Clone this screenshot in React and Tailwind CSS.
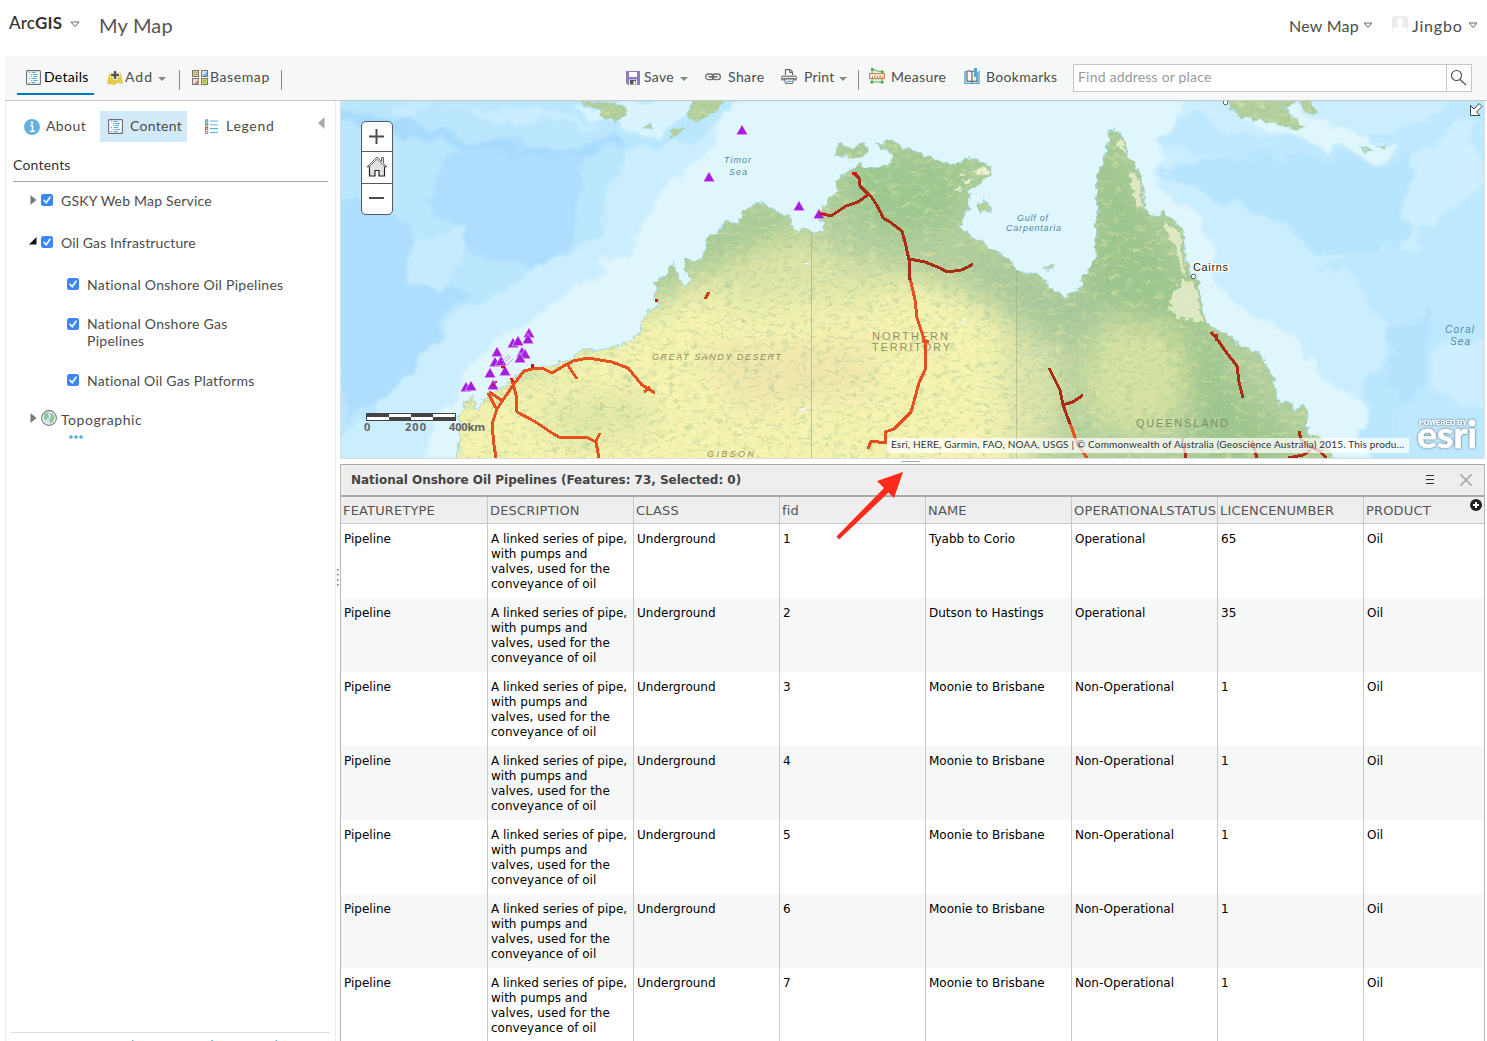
import React from "react";

const ROWS = [
  ["1", "Tyabb to Corio", "Operational", "65"],
  ["2", "Dutson to Hastings", "Operational", "35"],
  ["3", "Moonie to Brisbane", "Non-Operational", "1"],
  ["4", "Moonie to Brisbane", "Non-Operational", "1"],
  ["5", "Moonie to Brisbane", "Non-Operational", "1"],
  ["6", "Moonie to Brisbane", "Non-Operational", "1"],
  ["7", "Moonie to Brisbane", "Non-Operational", "1"],
];

const COLUMNS = ["FEATURETYPE", "DESCRIPTION", "CLASS", "fid", "NAME", "OPERATIONALSTATUS", "LICENCENUMBER", "PRODUCT"];

const GRID = "grid grid-cols-[147px_146px_146px_146px_146px_146px_146px_120px]";

function OutlineCaret({ className }) {
  return (
    <svg className={className} width="10" height="7" viewBox="0 0 10 7" fill="none" stroke="#666" strokeWidth="1">
      <path d="M1 1H9L5 5.5Z" />
    </svg>
  );
}

function SolidCaret({ className }) {
  return (
    <svg className={className} width="8" height="4" viewBox="0 0 8 4" fill="#888">
      <path d="M0 0H8L4 4Z" />
    </svg>
  );
}

function ListIcon() {
  return (
    <svg className="shrink-0" width="15" height="15" viewBox="0 0 15 15" fill="none">
      <rect x=".6" y=".6" width="13.8" height="13.8" rx="1" fill="#fbfdfe" stroke="#6b6b74" strokeWidth="1.1" />
      <path d="M3 2.5h1M5.5 2.5h4M5 4.5h1M7 4.5h5M5 6.5h1M7 6.5h4M3 8.5h1M5.5 8.5h5M5 10.5h1M7 10.5h5M3 12.5h1M5.5 12.5h4" stroke="#5aaee0" />
    </svg>
  );
}

function AddIcon() {
  return (
    <svg className="shrink-0" width="16" height="16" viewBox="0 0 16 16">
      <path d="M2 3l6-1 6 1 2 11-5-1-4 2-7-1Z" fill="#e3cb4f" />
      <path d="M2 3l6 7 6-6v-1L8 2Z" fill="#ecd96d" />
      <path d="M8 .5v9M3.5 5h9" stroke="#fff" strokeWidth="4.4" />
      <path d="M8 1v8M4 5h8" stroke="#555" strokeWidth="2.4" />
    </svg>
  );
}

function BasemapIcon() {
  return (
    <svg className="shrink-0" width="16" height="15" viewBox="0 0 16 15" strokeWidth="1" stroke="#777">
      <rect x=".5" y=".5" width="6" height="6" fill="#d9cf8a" />
      <rect x="9.5" y=".5" width="6" height="6" fill="#cfe6ee" />
      <rect x=".5" y="8.5" width="6" height="6" fill="#eadfd3" />
      <rect x="9.5" y="8.5" width="6" height="6" fill="#e2d37c" />
      <path d="M2 5l3-3M2 2l3 3" stroke="#b8924e" />
      <path d="M10 6l5-4v4Z" fill="#6bb6db" stroke="none" />
      <path d="M2 14l5-5v5Z" fill="#c98c62" stroke="none" />
      <path d="M11 13l3-3M11 10l3 3" stroke="#79a765" />
    </svg>
  );
}

function SaveIcon() {
  return (
    <svg className="shrink-0" width="14" height="14" viewBox="0 0 14 14">
      <path d="M0 0H14V14H2L0 12Z" fill="#8f7cba" />
      <rect x="3" y="1" width="8" height="5" fill="#fff" />
      <rect x="3" y="8.5" width="8" height="5.5" fill="#ece9f4" />
      <rect x="4" y="9" width="6" height="4.5" fill="#555" />
      <rect x="7.5" y="10" width="2" height="3.5" fill="#fff" />
    </svg>
  );
}

function ShareIcon() {
  return (
    <svg className="mb-0.5 shrink-0" width="16" height="8" viewBox="0 0 16 8" fill="none" stroke="#6c6c6c" strokeWidth="1.3">
      <rect x=".7" y="1" width="8" height="5.6" rx="2.6" />
      <rect x="7.3" y="1" width="8" height="5.6" rx="2.6" />
      <path d="M3.5 3.8h9" strokeWidth="1.6" />
    </svg>
  );
}

function PrintIcon() {
  return (
    <svg className="mb-0.5 shrink-0" width="16" height="15" viewBox="0 0 16 15">
      <path d="M4.5 6V.6H9L11.5 3V6" fill="#fff" stroke="#666" strokeWidth="1.2" />
      <path d="M8.5.6V3.5H11.5" fill="none" stroke="#666" />
      <path d="M1 6.5H15L16 8V11.5H0V8Z" fill="#8b8b8b" />
      <path d="M1 8.5H15" stroke="#e8e8e8" />
      <path d="M3.5 10h9l-1 4.4h-7Z" fill="#fff" stroke="#666" />
      <path d="M5.5 12.4h5" stroke="#52aee0" strokeWidth="1.4" />
    </svg>
  );
}

function MeasureIcon() {
  return (
    <svg className="mb-[3px] shrink-0" width="16" height="16" viewBox="0 0 16 16" fill="none">
      <path d="M3 1.500L13 4V14H3Z" fill="#dff0dc" stroke="#5faf62" />
      <rect x=".6" y="5.600" width="14.800" height="5" fill="#fff3e6" stroke="#c5864f" strokeWidth="1.100" />
      <path d="M3.500 8v2.500M6 7v3.500M8.500 8v2.500M11 7v3.500M13 8v2.500" stroke="#c5864f" />
      <path d="M2 0h2.500v2.500H2ZM12 2.500h2.500V5H12ZM1.500 13h2.500v2.500H1.500ZM12 13h2.500v2.500H12Z" fill="#4b9e50" />
    </svg>
  );
}

function BookmarkIcon() {
  return (
    <svg className="mb-[3px] shrink-0" width="16" height="16" viewBox="0 0 16 16" fill="none">
      <path d="M1 3v12.400h14V3" stroke="#4fa5d8" strokeWidth="1.400" />
      <path d="M3 13.500V3.200q3-1 5 .8 1-1 2-1M8 4v10M3 13.500q3-1 5 .5 2-1.500 5-.5V4" stroke="#666" strokeWidth="1.200" />
      <path d="M10 0h3v10l-1.500-1.600L10 10Z" fill="#4fa5d8" />
    </svg>
  );
}

function LegendIcon() {
  return (
    <svg className="shrink-0" width="15" height="16" viewBox="0 0 15 16" fill="none">
      <rect x="1.500" y=".9" width="2.200" height="2.200" stroke="#4f96bd" />
      <rect x="1.500" y="4.700" width="2.200" height="2.200" stroke="#5c9560" />
      <rect x="1.500" y="8.500" width="2.200" height="2.200" stroke="#c45a3b" />
      <rect x="1.500" y="12.500" width="2.200" height="2.200" stroke="#a68ac4" />
      <path d="M6 2h8M6 5.800h8M6 9.600h8M6 13.500h8" stroke="#62b3de" strokeWidth="1.100" />
    </svg>
  );
}

function Check() {
  return (
    <svg className="shrink-0" width="12" height="12" viewBox="0 0 12 12">
      <rect width="12" height="12" rx="2.500" fill="#3b87f7" />
      <path d="M3 6.300L5.200 8.700L9 3.200" fill="none" stroke="#fff" strokeWidth="1.600" strokeLinecap="round" />
    </svg>
  );
}

function GlobeIcon() {
  return (
    <svg className="shrink-0" width="16" height="16" viewBox="0 0 16 16">
      <circle cx="8" cy="8" r="7.400" fill="#fff" stroke="#777" strokeWidth="1.100" />
      <circle cx="8" cy="8" r="6" fill="#cfe6ef" />
      <path d="M3 4q3-2.500 5-1.500l-1 3 1 2-2 1-1 2L3 8.500ZM9 3q4 .5 4.500 4.500L12 12l-3 1.500L8.500 9 10 7Z" fill="#93c59a" />
    </svg>
  );
}

const LAND =
  "M456 462L461 433 460 417 466 402 473 394 474 410 479 411 483 400 488 395 497 391 510 382 520 373 533 368 553 367 573 358 585 349 597 351 617 346 633 340 642 330 643 318 653 310 660 304 656 299 655 282 664 276 673 264 679 279 685 288 693 280 685 270 686 260 703 262 706 247 708 238 720 231 728 221 737 224 743 211 763 203 772 210 782 213 791 222 794 231 806 229 817 233 826 232 820 218 828 198 838 193 837 182 850 171 860 165 867 168 890 166 894 156 885 148 876 144 893 140 903 148 917 153 937 160 953 166 967 158 983 162 992 168 982 182 969 191 968 207 958 225 966 233 983 243 1007 260 1020 272 1040 276 1050 289 1064 296 1080 290 1084 277 1095 260 1098 217 1098 175 1107 153 1110 133 1118 132 1125 141 1127 158 1134 163 1141 181 1143 203 1151 219 1163 212 1182 228 1184 250 1189 272 1198 283 1200 300 1206 324 1230 337 1238 346 1260 353 1264 363 1273 380 1279 408 1288 402 1297 412 1302 405 1307 413 1307 433 1325 441 1335 462Z";
const ISLANDS =
  "M583 101L622 105 625 114 616 121 604 117 597 109 585 106ZM643 127L650 124 652 127 645 129ZM670 134L683 127 685 130 673 136ZM687 118L692 104 694 98 726 98 712 113 700 121ZM835 155L841 144 853 147 863 143 868 151 860 158ZM976 205L985 201 991 211 980 213ZM1045 269L1053 265 1051 270ZM1228 98L1232 109 1243 117 1260 120 1285 125 1295 130 1303 127 1292 119 1290 113 1283 107 1290 104 1300 98ZM1300 98L1310 103 1316 114 1308 112ZM1362 147L1374 151 1366 152ZM1381 146L1386 146 1384 148ZM1109 131L1113 129 1112 132Z";

const PIPES_RED =
  "M854 173L859 178 860 186 867 193 870 195 876 204 881 213 883 218 890 222 902 231 906 246 909 260 910 280M819 213L831 216 846 206 858 202 869 194M909 259L925 262 940 268 947 272 961 270 968 267 973 264M1211 332L1217 339 1226 352 1237 366 1239 382 1243 398M1216 341V334M1049 368L1060 390 1063 405 1070 424M1063 405L1073 402 1083 395M1182 438L1186 458M1252 440L1257 458M1299 431L1301 440 1311 447 1320 451 1326 458M1311 450L1303 455 1288 458";
const PIPES_ORANGE =
  "M910 278L915 300 917 318 925 342 925 370 919 383 911 412 894 429 885 432 886 443 871 441 868 449M922 341h7M1069 420L1077 443 1087 458M496 458L494 445 492 424 497 409 505 397 514 384 524 371 532 369 542 368 552 373 562 367 573 361 588 358 612 362 628 368 642 385 655 393M567 364L577 379M644 392L650 387M488 393L497 410M489 392L503 401M512 380L516 395 517 412 534 421 552 433 559 437 586 437 596 442 599 458M596 441L600 433";

const PLATFORMS = [
  [742, 130], [709, 177], [799, 206], [819, 214], [529, 333], [513, 343], [518, 341], [528, 339], [497, 352],
  [522, 352], [525, 354], [520, 358], [495, 362], [501, 361], [505, 371], [490, 373], [493, 385], [466, 387], [471, 386],
];

function MapLabel({ x, y, children, size = 9, color = "#4d88a6", italic = true, spacing = 1, width }) {
  return (
    <text
      x={x} y={y} fontSize={size} fill={color} textLength={width} letterSpacing={spacing}
      fontStyle={italic ? "italic" : "normal"} fontFamily="Liberation Sans, sans-serif"
    >
      {children}
    </text>
  );
}

function MapCanvas() {
  return (
    <svg className="block h-[357px] w-[1143px]" viewBox="341 101 1143 357">
      <defs>
        <clipPath id="land"><path d={LAND + ISLANDS} /></clipPath>
        <filter id="soft" x="-20%" y="-20%" width="140%" height="140%"><feGaussianBlur stdDeviation="14" /></filter>
        <filter id="rough" colorInterpolationFilters="sRGB" filterUnits="userSpaceOnUse" x="341" y="101" width="1143" height="357">
          <feTurbulence type="fractalNoise" baseFrequency="0.14" numOctaves="3" seed="4" />
          <feDisplacementMap in="SourceGraphic" scale="9" xChannelSelector="R" yChannelSelector="G" />
        </filter>
        <filter id="shelf" colorInterpolationFilters="sRGB" filterUnits="userSpaceOnUse" x="341" y="101" width="1143" height="357">
          <feTurbulence type="fractalNoise" baseFrequency="0.03" numOctaves="4" seed="9" result="n" />
          <feDisplacementMap in="SourceGraphic" in2="n" scale="34" xChannelSelector="R" yChannelSelector="G" />
          <feGaussianBlur stdDeviation="1.500" />
        </filter>
        <filter id="grain" colorInterpolationFilters="sRGB" filterUnits="userSpaceOnUse" x="341" y="101" width="1143" height="357">
          <feTurbulence type="fractalNoise" baseFrequency="0.12 0.3" numOctaves="4" seed="2" />
          <feColorMatrix values="0 0 0 0 .62  0 0 0 0 .76  0 0 0 0 .58  3.2 0 0 0 -1.600" />
        </filter>
        <filter id="grainLight" colorInterpolationFilters="sRGB" filterUnits="userSpaceOnUse" x="341" y="101" width="1143" height="357">
          <feTurbulence type="fractalNoise" baseFrequency="0.09 0.25" numOctaves="4" seed="12" />
          <feColorMatrix values="0 0 0 0 .93  0 0 0 0 .93  0 0 0 0 .66  0 3.2 0 0 -1.700" />
        </filter>
        <filter id="glow" x="-20%" y="-20%" width="140%" height="140%">
          <feDropShadow dx="0" dy="0" stdDeviation="1.300" floodColor="#333" floodOpacity=".9" />
        </filter>
      </defs>

      <rect x="341" y="101" width="1143" height="357" fill="#bbe7fe" />
      <g filter="url(#shelf)">
        <path d="M460 145Q520 130 590 150L583 190 570 250 540 270 450 240 430 200Z" fill="#aeddfe" />
        <path d="M330 195L415 215 410 260 470 290 420 370 340 420Z" fill="#aeddfe" />
        <path d="M320 108Q400 120 470 140Q560 150 615 140L620 148Q540 156 460 148Q390 130 320 122Z" fill="#a8dafc" />
        <path d="M440 105L560 130 600 128 520 110Z" fill="#c9edff" />
        <path d="M620 150L700 140 760 90H1500V300L1400 330 1330 470H340V440Q430 340 480 305T600 240Z" fill="#cbeefe" />
        <path d="M740 90H1200Q1150 150 1160 190L1200 215 1215 290 1290 340 1360 400 1365 470H420Q450 370 510 330T630 250L660 190 720 140Z" fill="#e0f6fd" />
        <path d="M1160 170Q1230 150 1320 150T1410 160L1410 240 1370 270 1300 240 1230 200Z" fill="#b8e5fe" />
        <path d="M1195 110L1240 140 1350 140 1440 110 1490 90V470H1400Q1390 360 1400 330L1320 260 1420 250 1410 160 1200 155 1160 140Z" fill="#bee8fe" />
        <path d="M1410 165L1470 120 1490 170 1440 230 1405 210Z" fill="#cdefff" />
        <path d="M1390 330L1430 310 1420 400 1400 410Z" fill="#b5e2fd" />
        <path d="M1430 360L1490 330V410L1430 390Z" fill="#cdefff" />
        <path d="M1230 103L1250 125 1380 160 1400 150 1330 125 1300 101Z" fill="#e0f6fd" />
        <path d="M570 110L615 130 655 135 720 105 690 90 640 100Z" fill="#d9f4fe" />
        <path d="M415 240L465 230 440 290 410 275ZM390 110L430 105 410 125Z" fill="#c6ebff" />
      </g>

      <g filter="url(#rough)">
        <path d={LAND + ISLANDS} fill="none" stroke="#a7d9dc" strokeWidth="2" />
        <g clipPath="url(#land)">
          <rect x="341" y="90" width="1143" height="380" fill="#b3cf9e" />
          <g filter="url(#soft)">
            <path d="M430 490V410L540 365 660 305 720 270 800 285 880 270 960 290 1020 330 1030 490Z" fill="#f6f4b0" />
            <path d="M700 245L800 235 870 270 900 300 720 310Z" fill="#dfe6a8" />
            <path d="M1000 330L1060 350 1060 440 1010 470Z" fill="#dde4ac" />
            <path d="M1085 320L1180 330 1190 400 1150 440 1090 420Z" fill="#d6e2a2" />
            <path d="M1100 110L1150 220 1190 280 1230 380 1310 460 1200 470 1180 330 1080 300Z" fill="#9cc68e" />
            <path d="M840 150L980 155 960 220 900 240 850 210Z" fill="#9dc890" />
            <path d="M960 240L1060 300 1110 300 1090 350 1000 300Z" fill="#a6c89b" />
            <path d="M660 270L720 220 780 205 800 232 700 275Z" fill="#a8cb96" />
            <path d="M700 350L860 340 880 390 740 410Z" fill="#f1e6ac" />
            <path d="M540 400L640 390 660 430 560 450Z" fill="#e2e8a6" />
          </g>
          <rect x="341" y="101" width="1143" height="357" filter="url(#grain)" opacity=".5" />
          <rect x="341" y="101" width="1143" height="357" filter="url(#grainLight)" opacity=".5" />
          <path d="M1119 138l5 2v12l-5-5ZM1132 170l8 12 2 25-4 4-4-22-4-8ZM1165 222l14 10 3 24 4 20-5-3-5-28-12-15ZM1181 280l14 4 4 18 4 20-28-4-6-15Z" fill="#e6edcb" fillOpacity=".85" />
          <path d="M956 190l9-3-6 4ZM960 182l18-4-12 5ZM970 172l18-5-8 6ZM958 176l10-3-6 4ZM980 168l12 2-9 3Z" fill="#eef1d6" />
          <path d="M802 408l8-4-6 8-8 2ZM960 321l6-2-3 6ZM804 263l6-4-3 6Z" fill="#f3f4ea" />
        </g>
      </g>

      <path d="M811.500 232V458M1016.500 270V458" stroke="#a3a98c" strokeOpacity=".6" />

      <MapLabel x="724" y="163" width="28">Timor</MapLabel>
      <MapLabel x="729" y="175" width="19">Sea</MapLabel>
      <MapLabel x="1017" y="221" width="32">Gulf of</MapLabel>
      <MapLabel x="1006" y="231" width="56">Carpentaria</MapLabel>
      <MapLabel x="1445" y="333" size={10} width="30">Coral</MapLabel>
      <MapLabel x="1450" y="345" size={10} width="21">Sea</MapLabel>
      <MapLabel x="652" y="360" color="#8f8c60" width="130">GREAT SANDY DESERT</MapLabel>
      <MapLabel x="707" y="457" color="#8f8c60" width="48">GIBSON</MapLabel>
      <MapLabel x="872" y="340" size={11} color="#96906b" italic={false} width="77">NORTHERN</MapLabel>
      <MapLabel x="872" y="351" size={11} color="#96906b" italic={false} width="79">TERRITORY</MapLabel>
      <MapLabel x="1136" y="427" size={11} color="#7f8f68" italic={false} width="93">QUEENSLAND</MapLabel>
      <text x="1193" y="271" fontSize="11" textLength="35" fill="#222" stroke="#fff" strokeWidth="2.500" paintOrder="stroke" fontFamily="Liberation Sans, sans-serif">Cairns</text>
      <circle cx="1193.500" cy="276.500" r="2.300" fill="#fff" stroke="#555" />
      <circle cx="1225.500" cy="102.500" r="2.300" fill="#fff" stroke="#555" />

      <g fill="none" strokeWidth="3" strokeLinejoin="round" shapeRendering="crispEdges">
        <path d={PIPES_ORANGE} stroke="#e4501f" />
        <path d={PIPES_RED} stroke="#ab2c14" />
        <path d="M705 299L709 292" stroke="#c9401b" />
        <path d="M852 173h5M656 302l1-3M532 368l1-4M511 378l2 4M494 384l2-3" stroke="#d2151a" strokeWidth="3" />
      </g>

      {PLATFORMS.map(([x, y], i) => (
        <path key={i} d={`M${x} ${y - 5.5}L${x + 5.8} ${y + 4.7}H${x - 5.8}Z`} fill="#a61ee0" stroke="#fff" strokeOpacity=".6" strokeWidth=".8" />
      ))}
      <path d="M503 364l8-8M505 367l8-8M502 361l7-6" stroke="#c9a0e6" />
      <path d="M501 367h4M493 386l1-2M820 214h6" stroke="#c2182f" strokeWidth="2.500" />

      <g shapeRendering="crispEdges">
        <rect x="366" y="413" width="90" height="8" fill="#444" />
        <path d="M389 414h22v3h-22ZM433 414h22v3h-22ZM367 417h22v3h-22ZM411 417h22v3h-22Z" fill="#fff" />
      </g>
      <g fontFamily="Open Sans, sans-serif" fontSize="11" fontWeight="700" fill="#666">
        <text x="364" y="431">0</text>
        <text x="405" y="431" textLength="21">200</text>
        <text x="449" y="431" textLength="36">400km</text>
      </g>

      <rect x="887" y="438" width="522" height="15" fill="#fff" fillOpacity=".72" />
      <text x="891" y="448" fontSize="10" textLength="513" fill="#333" fontFamily="Lato, sans-serif">
        Esri, HERE, Garmin, FAO, NOAA, USGS | © Commonwealth of Australia (Geoscience Australia) 2015. This produ…
      </text>

      <g filter="url(#glow)" fill="#fff">
        <text x="1419" y="425" fontSize="7" fontWeight="700" textLength="48" fontFamily="Liberation Sans, sans-serif">POWERED BY</text>
        <text x="1417" y="448" fontSize="36" fontWeight="700" textLength="60" lengthAdjust="spacingAndGlyphs" fontFamily="Lato, sans-serif" stroke="#fff" strokeWidth=".5">esrı</text>
        <circle cx="1472" cy="423" r="3.300" />
      </g>

      <path d="M1470.500 115.500V105.500L1474 109 1479 103.500 1482 106.500 1476.500 112 1480 115.500Z" fill="#fff" stroke="#444" />
    </svg>
  );
}

function ZoomControl() {
  return (
    <div className="absolute left-[20px] top-[20px] flex h-[94px] w-[32px] flex-col divide-y divide-[#57585a] overflow-hidden rounded-[5px] border border-[#57585a] bg-white">
      <div className="flex flex-1 items-center justify-center pb-px pr-px">
        <svg width="15" height="15" viewBox="0 0 15 15" stroke="#4c4c4c" strokeWidth="2"><path d="M0 7.500H15M7.500 0V15" /></svg>
      </div>
      <div className="flex flex-1 items-center justify-center pb-0.5">
        <svg width="22" height="21" viewBox="0 0 22 21">
          <path d="M3.500 10V20H9V14.500H13V20H18.500V10" fill="#e2e2e2" stroke="#222" strokeWidth="1.200" />
          <path d="M1 11L11 1 15.500 5.500V1.500H17.500V7.500L21 11L18.500 10.500 11 3.500 3.500 10.500Z" fill="#e2e2e2" stroke="#444" strokeWidth=".8" strokeLinejoin="round" />
          <path d="M4 10.700L11 4l7 6.700V13H4Z" fill="#e2e2e2" />
        </svg>
      </div>
      <div className="flex flex-1 items-center justify-center pb-0.5 pr-px">
        <svg width="15" height="2" viewBox="0 0 15 2" fill="#4c4c4c"><rect width="15" height="2" /></svg>
      </div>
    </div>
  );
}

function Header() {
  return (
    <header className="flex h-14 shrink-0 items-start text-[#4c4c4c]">
      <div className="ml-[9px] mt-[11px] w-[54px] whitespace-nowrap text-[17px] leading-6 tracking-[0.15px] text-[#333]">
        <span className="font-medium">Arc</span><span className="font-bold">GIS</span>
      </div>
      <OutlineCaret className="ml-[7px] mt-[21px]" />
      <div className="ml-[19px] mt-[11px] whitespace-nowrap text-[20px] leading-7 tracking-[0.2px] text-[#555]">My Map</div>
      <div className="ml-auto mt-[14px] w-[71px] whitespace-nowrap text-[16px] leading-6 tracking-[0.25px]">New Map</div>
      <OutlineCaret className="ml-[3px] mt-[22px]" />
      <svg className="ml-[19px] mt-4" width="16" height="16" viewBox="0 0 16 16">
        <rect width="16" height="16" fill="#ececec" />
        <path d="M8 2a3.200 3.600 0 0 1 2 6.200v2l5 2V16H1v-3.800l5-2v-2A3.200 3.600 0 0 1 8 2Z" fill="#fff" />
      </svg>
      <div className="ml-[4px] mt-[14px] w-[52px] whitespace-nowrap text-[16px] leading-6 tracking-[0.8px]">Jingbo</div>
      <OutlineCaret className="ml-[4px] mr-[9px] mt-[22px]" />
    </header>
  );
}

function Toolbar() {
  return (
    <nav className="ml-[5px] flex h-[45px] shrink-0 border-b border-[#c8c8c8] bg-[#f6f8f8] text-[14px] leading-5 tracking-[0.2px] text-[#4c4c4c] [&_span]:mb-0.5">
      <div className="ml-3 flex h-[39px] w-[77px] items-center border-b-2 border-[#0079c1] pl-[9px] pt-1.5 text-black">
        <ListIcon /><span className="ml-[3px] tracking-[0.3px]">Details</span>
      </div>
      <div className="ml-[13px] flex h-[43px] w-[72px] items-center">
        <AddIcon /><span className="ml-[2px] tracking-[1px]">Add</span><SolidCaret className="ml-[5px] mt-0.5" />
      </div>
      <div className="mt-3.5 h-5 w-px bg-[#8a8a8a]" />
      <div className="ml-3 flex h-[43px] w-[89px] items-center">
        <BasemapIcon /><span className="ml-[2px] tracking-[0.6px]">Basemap</span>
      </div>
      <div className="mt-3.5 h-5 w-px bg-[#8a8a8a]" />
      <div className="ml-[344px] flex h-[43px] w-[79px] items-center">
        <SaveIcon /><span className="ml-[4px] tracking-[0.3px]">Save</span><SolidCaret className="ml-1.5 mt-0.5" />
      </div>
      <div className="flex h-[43px] w-[76px] items-center">
        <ShareIcon /><span className="ml-[7px] tracking-[0.4px]">Share</span>
      </div>
      <div className="flex h-[43px] w-[77px] items-center">
        <PrintIcon /><span className="ml-[7px]">Print</span><SolidCaret className="ml-[5px] mt-0.5" />
      </div>
      <div className="mt-3.5 h-5 w-px bg-[#8a8a8a]" />
      <div className="ml-[10px] flex h-[43px] w-[95px] items-center">
        <MeasureIcon /><span className="ml-[6px] tracking-[0.3px]">Measure</span>
      </div>
      <div className="flex h-[43px] w-[109px] items-center">
        <BookmarkIcon /><span className="ml-[6px] tracking-[0.3px]">Bookmarks</span>
      </div>
      <div className="mt-2 flex h-7 w-[399px] border border-[#c6c6c6] bg-white">
        <div className="flex-1 pl-1 leading-[24px] text-[#9a9a9a]">Find address or place</div>
        <div className="flex w-[25px] items-center justify-center border-l border-[#c6c6c6] pb-px pr-px">
          <svg width="17" height="17" viewBox="0 0 17 17" fill="none" stroke="#4c4c4c" strokeWidth="1.100">
            <circle cx="6.500" cy="6.500" r="5" /><path d="M10 10.500L16 16" />
          </svg>
        </div>
      </div>
    </nav>
  );
}

function Expand({ open }) {
  return open ? (
    <svg className="mb-1 shrink-0" width="8" height="8" viewBox="0 0 8 8"><path d="M0 7.500L7.500 0V7.500Z" fill="#111" /></svg>
  ) : (
    <svg className="mb-0.5 shrink-0" width="8" height="10" viewBox="0 0 8 10"><path d="M.5 0L6.500 5 .5 10Z" fill="#7a7a7a" /></svg>
  );
}

function Sidebar() {
  return (
    <aside className="ml-[5px] flex w-[331px] shrink-0 flex-col border-x border-[#ebebeb] text-[14px] leading-[17px] tracking-[0.2px] text-[#4c4c4c]">
      <div className="flex h-[41px] pt-[10px] [&_span]:mb-0.5">
        <div className="ml-[18px] flex h-[31px] w-[76px] items-center">
          <svg width="16" height="16" viewBox="0 0 16 16">
            <circle cx="8" cy="8" r="8" fill="#62b1e0" />
            <path d="M6.300 6.500h2.200V12M6 12.200h5" stroke="#fff" strokeWidth="1.500" fill="none" /><circle cx="8" cy="3.800" r="1.200" fill="#fff" />
          </svg>
          <span className="ml-[6px] tracking-[0.4px]">About</span>
        </div>
        <div className="flex h-[31px] w-[87px] items-center bg-[#d2e9f7] pl-2">
          <ListIcon /><span className="ml-[7px] tracking-[0.3px]">Content</span>
        </div>
        <div className="ml-[17px] flex h-[31px] w-[80px] items-center">
          <LegendIcon /><span className="ml-[7px] tracking-[0.7px]">Legend</span>
        </div>
        <svg className="ml-[34px] mt-1.5" width="7" height="12" viewBox="0 0 7 12"><path d="M6.500 0V12L0 6Z" fill="#aaa" /></svg>
      </div>
      <div className="ml-[7px] mt-[14px] h-[26px] w-[315px] border-b border-[#a5a5a5] text-[#333]">Contents</div>

      <div className="ml-6 mt-[10px] flex h-[17px] items-center">
        <Expand /><div className="mb-0.5 ml-[3px]"><Check /></div><span className="ml-2">GSKY Web Map Service</span>
      </div>
      <div className="ml-[23px] mt-[25px] flex h-[17px] items-center">
        <Expand open /><div className="mb-0.5 ml-[4px]"><Check /></div><span className="ml-2 tracking-[0.12px]">Oil Gas Infrastructure</span>
      </div>
      <div className="ml-[61px] mt-[27px] flex h-[15px] items-start">
        <Check /><span className="-mt-0.5 ml-2 tracking-[0.28px]">National Onshore Oil Pipelines</span>
      </div>
      <div className="ml-[61px] mt-[25px] flex h-[31px] items-start">
        <Check /><span className="-mt-[3px] ml-2 w-[160px] tracking-[0.28px]">National Onshore Gas Pipelines</span>
      </div>
      <div className="ml-[61px] mt-[25px] flex h-[15px] items-start">
        <Check /><span className="-mt-0.5 ml-2">National Oil Gas Platforms</span>
      </div>
      <div className="ml-6 mt-[21px] flex h-[18px] items-center">
        <Expand /><div className="-mt-0.5 ml-[3px]"><GlobeIcon /></div><span className="ml-1 mt-px tracking-[0.55px]">Topographic</span>
      </div>
      <svg className="ml-[63px] mt-[7px]" width="14" height="4" viewBox="0 0 14 4" fill="#58a9d6">
        <circle cx="2" cy="2" r="1.800" /><circle cx="7" cy="2" r="1.800" /><circle cx="12" cy="2" r="1.800" />
      </svg>
      <div className="ml-[5px] mt-auto h-[9px] w-[319px] overflow-hidden whitespace-nowrap border-t border-[#dedede] pl-4 pt-[5px] text-[12px] leading-[14px] tracking-normal text-[#4a9cc9]">
        Trust Center&nbsp;&nbsp;.&nbsp;&nbsp;Legal&nbsp;&nbsp;.&nbsp;&nbsp;Contact Esri&nbsp;&nbsp;.&nbsp;&nbsp;Report Abuse
      </div>
    </aside>
  );
}

function FeatureTable() {
  return (
    <section className="relative flex flex-1 flex-col overflow-hidden border-x border-[#b9baa6] font-['DejaVu_Sans',sans-serif]">
      <div className="flex h-[33px] shrink-0 items-center border-b-2 border-t border-[#a9aaa4] bg-[#eee] pl-2.5">
        <span className="whitespace-nowrap text-[12px] font-bold tracking-[-0.02px] text-[#444]">National Onshore Oil Pipelines (Features: 73, Selected: 0)</span>
        <svg className="ml-auto" width="8" height="10" viewBox="0 0 8 10" stroke="#333"><path d="M0 .5H8M0 4.500H8M0 8.500H8" /></svg>
        <svg className="ml-[26px] mr-3" width="12" height="12" viewBox="0 0 12 12" stroke="#aaa" strokeWidth="1.800"><path d="M0 0L12 12M12 0L0 12" /></svg>
      </div>
      <div className={`${GRID} h-[27px] shrink-0 border-b border-[#c8c8c8] bg-[#eee] text-[13px] leading-[27px] tracking-[0.16px] text-[#555]`}>
        {COLUMNS.map((c) => (
          <div key={c} className="whitespace-nowrap border-r border-[#c8c8c8] pl-[2px] last:border-r-0">{c}</div>
        ))}
      </div>
      {ROWS.map(([fid, name, status, licence], i) => (
        <div key={fid} className={`${GRID} h-[74px] shrink-0 text-[12px] leading-[15px] text-black ${i % 2 ? "bg-[#f6f8f7]" : "bg-white"}`}>
          {["Pipeline", "A linked series of pipe, with pumps and valves, used for the conveyance of oil", "Underground", fid, name, status, licence, "Oil"].map((v, j) => (
            <div key={j} className="border-r border-[#c8c8c8] pl-[3px] pt-[8px] last:border-r-0">{v}</div>
          ))}
        </div>
      ))}
      <svg className="absolute right-[2px] top-[35px]" width="12" height="12" viewBox="0 0 12 12">
        <circle cx="6" cy="6" r="6" fill="#222" /><path d="M6 3V9M3 6H9" stroke="#fff" strokeWidth="2" />
      </svg>
    </section>
  );
}

export default function App() {
  return (
    <div className="relative flex h-[1041px] w-[1487px] flex-col overflow-hidden bg-white font-[Lato,sans-serif]">
      <Header />
      <Toolbar />
      <div className="flex min-h-0 flex-1">
        <Sidebar />
        <div className="flex w-1 shrink-0 items-start pt-[468px]">
          <svg width="3" height="18" viewBox="0 0 3 18" fill="#777"><path d="M1 0h1.500v1.500H1ZM1 5h1.500v1.500H1ZM1 10h1.500v1.500H1ZM1 15h1.500v1.500H1Z" /></svg>
        </div>
        <div className="flex w-[1145px] flex-col">
          <div className="relative h-[358px] shrink-0 border-x border-b border-[#ddd]">
            <MapCanvas />
            <ZoomControl />
          </div>
          <div className="flex h-[5px] shrink-0 justify-center pr-1 pt-[2px]"><div className="h-px w-[19px] bg-[#aaa]" /></div>
          <FeatureTable />
        </div>
      </div>
      <svg className="absolute left-[836px] top-[471px]" width="68" height="70" viewBox="836 471 68 70" fill="#fb2b1c">
        <path d="M903 472L894 498 888.500 492.500 839 539.500 836.500 536.500 884 488 877 481Z" />
      </svg>
    </div>
  );
}
